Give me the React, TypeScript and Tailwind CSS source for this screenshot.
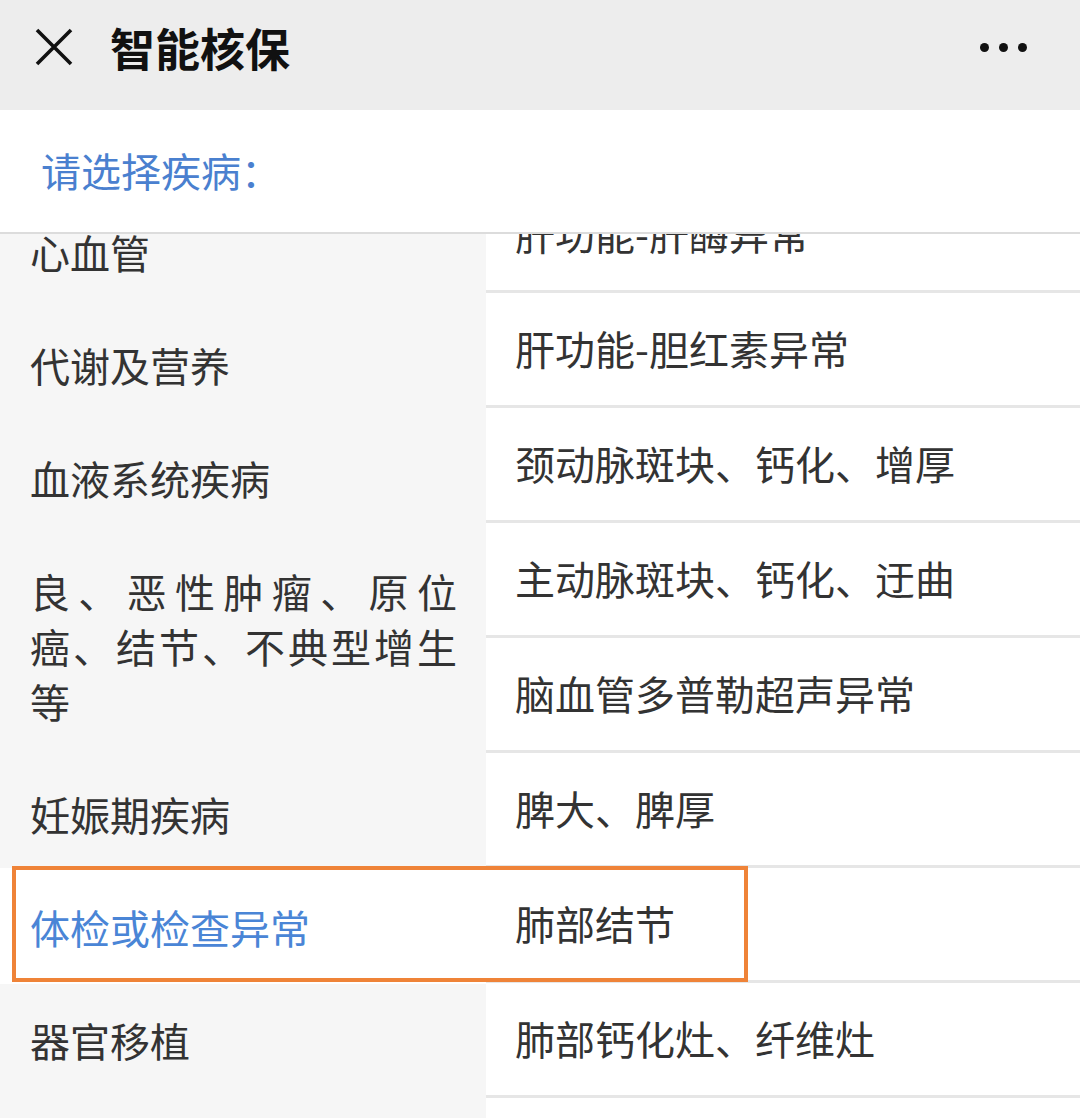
import React from "react";

const leftItems: { label: string; selected?: boolean }[] = [
  { label: "心血管" },
  { label: "代谢及营养" },
  { label: "血液系统疾病" },
  { label: "良、恶性肿瘤、原位癌、结节、不典型增生等" },
  { label: "妊娠期疾病" },
  { label: "体检或检查异常", selected: true },
  { label: "器官移植" },
];

const rightItems = [
  "肝功能-肝酶异常",
  "肝功能-胆红素异常",
  "颈动脉斑块、钙化、增厚",
  "主动脉斑块、钙化、迂曲",
  "脑血管多普勒超声异常",
  "脾大、脾厚",
  "肺部结节",
  "肺部钙化灶、纤维灶",
];

export default function App() {
  return (
    <div
      className="w-[1080px] h-[1118px] overflow-hidden bg-white flex flex-col relative"
      style={{ fontFamily: '"Noto Sans CJK SC", "Noto Sans", sans-serif' }}
    >
      {/* Top bar */}
      <div className="h-[110px] shrink-0 bg-[#ededed] flex items-center pl-[35px] pr-[53px]">
        <svg width="38" height="38" viewBox="0 0 38 38" className="shrink-0 -mt-[16px]">
          <path d="M2 2 L36 36 M36 2 L2 36" stroke="#111" strokeWidth="3.6" strokeLinecap="butt" />
        </svg>
        <div className="ml-[37px] text-[45px] leading-none font-bold text-[#111] -mt-[16px]">智能核保</div>
        <div className="ml-auto flex items-center gap-[10px] -mt-[16px]">
          <span className="w-[9px] h-[9px] rounded-full bg-[#111]" />
          <span className="w-[9px] h-[9px] rounded-full bg-[#111]" />
          <span className="w-[9px] h-[9px] rounded-full bg-[#111]" />
        </div>
      </div>

      {/* Prompt */}
      <div className="h-[124px] shrink-0 bg-white flex items-center pl-[41px] border-b-[2px] border-[#dcdcdc]">
        <div className="text-[40px] leading-none text-[#4a80cf] -mt-[2px]">请选择疾病：</div>
      </div>

      {/* Lists */}
      <div className="flex-1 flex overflow-hidden">
        <div className="w-[486px] shrink-0 bg-[#f6f6f6] overflow-hidden">
          <div className="-mt-[38px]">
            {leftItems.map((it) => (
              <div
                key={it.label}
                className={
                  it.selected
                    ? "min-h-[113px] flex items-center pl-[30px] pr-[29px] py-[29px] bg-white -mt-[3px] pt-[32px]"
                    : "min-h-[113px] flex items-center pl-[30px] pr-[29px] py-[29px]"
                }
              >
                <div
                  className={
                    it.selected
                      ? "w-full text-[40px] leading-[55px] text-justify text-[#4a85d6]"
                      : "w-full text-[40px] leading-[55px] text-justify text-[#333333]"
                  }
                >
                  {it.label}
                </div>
              </div>
            ))}
          </div>
        </div>
        <div className="flex-1 bg-white overflow-hidden">
          <div className="-mt-[56px]">
            {rightItems.map((t) => (
              <div
                key={t}
                className="h-[115px] flex items-center pl-[29px] border-b-[3px] border-[#e6e6e6]"
              >
                <div className="text-[40px] leading-none text-[#333333] -mt-[2px]">{t}</div>
              </div>
            ))}
          </div>
        </div>
      </div>

      {/* Highlight annotation */}
      <div className="absolute left-[12px] top-[866px] w-[736px] h-[116px] border-[4px] border-[#ef8338] pointer-events-none" />
    </div>
  );
}
